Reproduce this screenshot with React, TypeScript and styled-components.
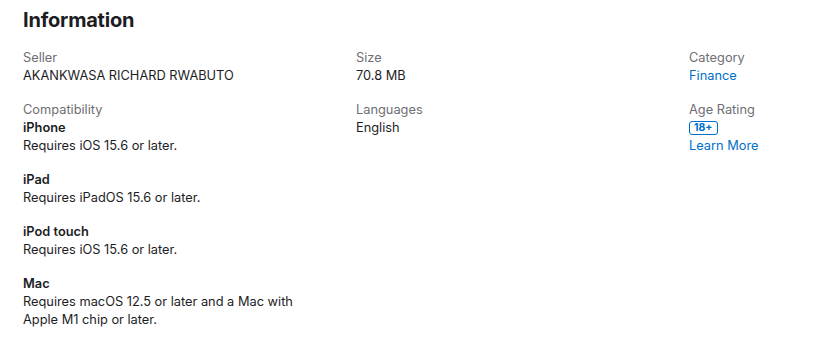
import React from 'react'
import styled, { createGlobalStyle } from 'styled-components'

type InfoItem = {
	label: string;
	value?: string;
	link?: string;
	badge?: string;
	extraLink?: string;
	devices?: { name: string; text: string }[];
}

const GlobalStyle = createGlobalStyle`
	body {
		margin: 0;
		background: #ffffff;
		font-family: 'Inter', 'Noto Sans', sans-serif;
		color: #1d1d1f;
		-webkit-font-smoothing: antialiased;
	}
`
const Section = styled.section`
	padding: 8px 23px 0;
`
const Title = styled.h2`
	margin: 0 0 17px;
	font-size: 20px;
	line-height: 24px;
	font-weight: 700;
	letter-spacing: -0.2px;
	color: #1d1d1f;
`
const Grid = styled.dl`
	margin: 0;
	display: grid;
	grid-template-columns: 300px 300px 1fr;
	column-gap: 33px;
`
const Column = styled.div`
	display: flex;
	flex-direction: column;
	gap: 16px;
`
const Item = styled.div`
	display: flex;
	flex-direction: column;
`
const Label = styled.dt`
	font-size: 12.8px;
	line-height: 18px;
	color: #6e6e73;
`
const Value = styled.dd`
	margin: 0;
	font-size: 12.8px;
	line-height: 18px;
	color: #1d1d1f;
`
const Link = styled.a`
	font-size: 12.8px;
	line-height: 18px;
	color: #0070c9;
	text-decoration: none;
`
const Badge = styled.span`
	display: inline-block;
	align-self: flex-start;
	margin: 2px 0 2px;
	padding: 0 4px;
	border: 1px solid #0070c9;
	border-radius: 3px;
	font-size: 10.5px;
	line-height: 12px;
	font-weight: 700;
	color: #0070c9;
`
const DeviceList = styled.div`
	display: flex;
	flex-direction: column;
	gap: 16px;
`
const Device = styled.div`
	display: flex;
	flex-direction: column;
	max-width: 290px;
`
const DeviceName = styled.span`
	font-size: 12.8px;
	line-height: 18px;
	font-weight: 600;
	color: #1d1d1f;
`

const columns: InfoItem[][] = [
	[
		{ label: 'Seller', value: 'AKANKWASA RICHARD RWABUTO' },
		{
			label: 'Compatibility',
			devices: [
				{ name: 'iPhone', text: 'Requires iOS 15.6 or later.' },
				{ name: 'iPad', text: 'Requires iPadOS 15.6 or later.' },
				{ name: 'iPod touch', text: 'Requires iOS 15.6 or later.' },
				{ name: 'Mac', text: 'Requires macOS 12.5 or later and a Mac with Apple M1 chip or later.' },
			],
		},
	],
	[
		{ label: 'Size', value: '70.8 MB' },
		{ label: 'Languages', value: 'English' },
	],
	[
		{ label: 'Category', link: 'Finance' },
		{ label: 'Age Rating', badge: '18+', extraLink: 'Learn More' },
	],
]

const App = () => {
	return (
		<>
			<GlobalStyle />
			<Section>
				<Title>Information</Title>
				<Grid>
					{columns.map((col, i) => (
						<Column key={i}>
							{col.map(item => (
								<Item key={item.label}>
									<Label>{item.label}</Label>
									{item.value && <Value>{item.value}</Value>}
									{item.link && <Link href="#">{item.link}</Link>}
									{item.badge && <Badge>{item.badge}</Badge>}
									{item.extraLink && <Link href="#">{item.extraLink}</Link>}
									{item.devices && (
										<DeviceList>
											{item.devices.map(d => (
												<Device key={d.name}>
													<DeviceName>{d.name}</DeviceName>
													<Value>{d.text}</Value>
												</Device>
											))}
										</DeviceList>
									)}
								</Item>
							))}
						</Column>
					))}
				</Grid>
			</Section>
		</>
	)
}

export default App
